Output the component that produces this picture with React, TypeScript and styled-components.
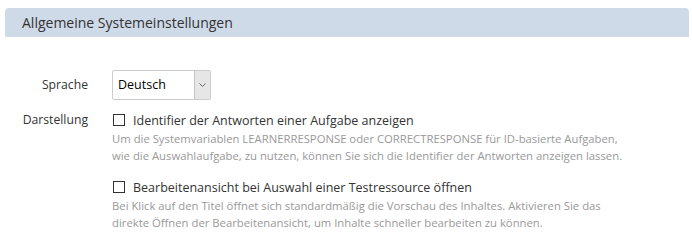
import React from "react";
import styled, { createGlobalStyle } from "styled-components";

const GlobalStyle = createGlobalStyle`
  body {
    margin: 0;
    background: #ffffff;
    font-family: "Open Sans", "Noto Sans", sans-serif;
    color: #333333;
  }
`;

const Panel = styled.section`
  padding: 8px 3px 0 5px;
`;

const PanelHeader = styled.h2`
  margin: 0;
  height: 28px;
  display: flex;
  align-items: center;
  padding: 0 17px 1px;
  background: #cfdae8;
  border-radius: 4px 4px 0 0;
  font-size: 14px;
  font-weight: 400;
  color: #333333;
`;

const Form = styled.div`
  display: grid;
  grid-template-columns: 83px 1fr;
  column-gap: 24px;
  row-gap: 10px;
  padding-top: 33px;
`;

const Label = styled.div`
  text-align: right;
  font-size: 12.2px;
  line-height: 20px;
`;

const LabelCell = styled.div<{ $top: number }>`
  padding-top: ${(p) => p.$top}px;
`;

const Select = styled.div`
  width: 99px;
  height: 30px;
  box-sizing: border-box;
  border: 1px solid #cccccc;
  border-radius: 2px;
  display: flex;
  align-items: center;
  justify-content: space-between;
  font-size: 12.5px;
  color: #000;
`;

const SelectText = styled.span`
  padding-left: 5px;
  padding-bottom: 2px;
`;

const Arrow = styled.span`
  width: 15px;
  height: 28px;
  background: #e6e6e6;
  border-left: 1px solid #c4c4c4;
  display: flex;
  align-items: center;
  justify-content: center;
`;

const Options = styled.div`
  display: flex;
  flex-direction: column;
  gap: 13px;
`;

const Option = styled.div`
  display: flex;
  flex-direction: column;
`;

const CheckRow = styled.label`
  display: flex;
  align-items: center;
  gap: 8px;
  font-size: 12.5px;
  height: 20px;
  padding-left: 1px;
`;

const Box = styled.span`
  width: 12px;
  height: 12px;
  border: 1px solid #333;
  box-sizing: border-box;
`;

const Help = styled.p`
  margin: 0;
  font-size: 11.3px;
  line-height: 17px;
  color: #999999;
  max-width: 520px;
`;

export default function App() {
  return (
    <Panel>
      <GlobalStyle />
      <PanelHeader>Allgemeine Systemeinstellungen</PanelHeader>
      <Form>
        <LabelCell $top={5}>
          <Label>Sprache</Label>
        </LabelCell>
        <Select>
          <SelectText>Deutsch</SelectText>
          <Arrow>
            <svg width="7" height="4" viewBox="0 0 7 4">
              <path d="M0.5 0.5 L3.5 3.5 L6.5 0.5" fill="none" stroke="#666" strokeWidth="1" />
            </svg>
          </Arrow>
        </Select>
        <LabelCell $top={0}>
          <Label>Darstellung</Label>
        </LabelCell>
        <Options>
          <Option>
            <CheckRow>
              <Box />
              Identifier der Antworten einer Aufgabe anzeigen
            </CheckRow>
            <Help>
              Um die Systemvariablen LEARNERRESPONSE oder CORRECTRESPONSE für ID-basierte Aufgaben,
              wie die Auswahlaufgabe, zu nutzen, können Sie sich die Identifier der Antworten anzeigen lassen.
            </Help>
          </Option>
          <Option>
            <CheckRow>
              <Box />
              Bearbeitenansicht bei Auswahl einer Testressource öffnen
            </CheckRow>
            <Help>
              Bei Klick auf den Titel öffnet sich standardmäßig die Vorschau des Inhaltes. Aktivieren Sie das
              direkte Öffnen der Bearbeitenansicht, um Inhalte schneller bearbeiten zu können.
            </Help>
          </Option>
        </Options>
      </Form>
    </Panel>
  );
}
